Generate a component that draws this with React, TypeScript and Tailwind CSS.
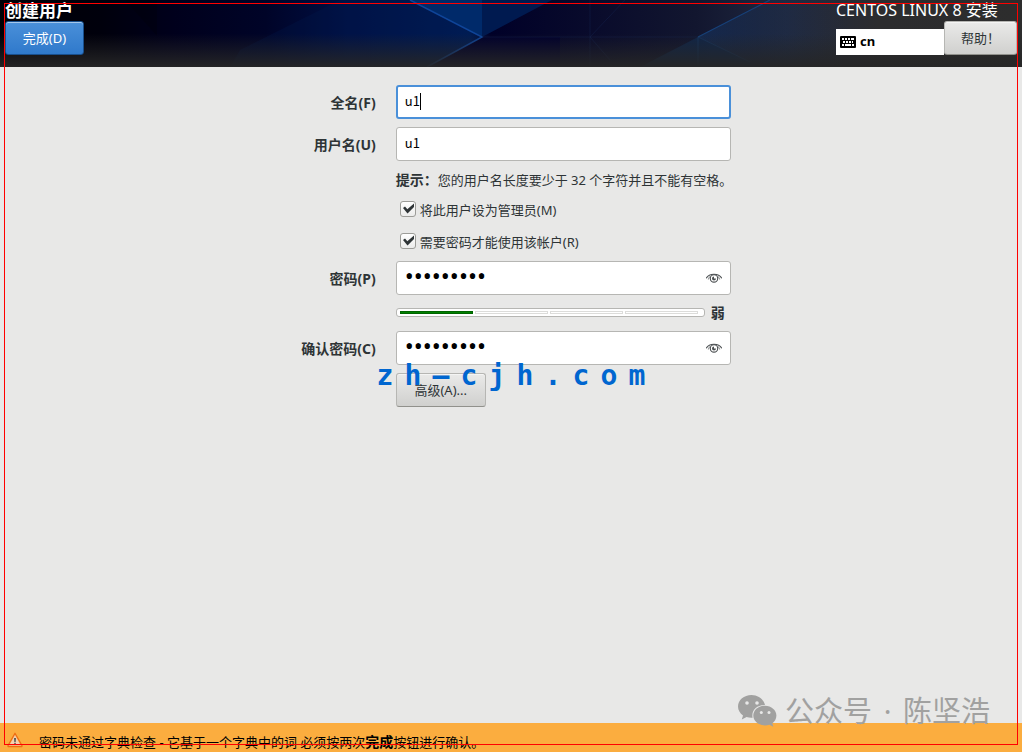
import { useState } from 'react';
import type { ReactNode } from 'react';

const WATERMARK = 'zh–cjh.com';

const buttonBase =
  'h-[34px] rounded-[3px] border pt-0.5 text-[13px] shadow-[inset_0_1px_rgba(255,255,255,0.5)]';
const greyButton =
  'border-[#b6b6b3] border-b-[#91918c] bg-linear-to-b from-[#eaeae9] to-[#d0d0ce] text-[#2e3436]';
const fieldBase =
  'h-[34px] w-full rounded-[3px] border bg-white pl-2 text-black outline-none';

function HeaderArt() {
  return (
    <svg
      className="absolute inset-0 h-full w-full"
      viewBox="0 0 1022 67"
      preserveAspectRatio="none"
      aria-hidden="true"
    >
      <defs>
        <linearGradient id="base" x1="0" x2="1" y1="0" y2="0">
          <stop offset="0" stopColor="#000006" />
          <stop offset="0.1" stopColor="#00000c" />
          <stop offset="0.17" stopColor="#00001c" />
          <stop offset="0.26" stopColor="#000428" />
          <stop offset="0.34" stopColor="#001044" />
          <stop offset="0.46" stopColor="#001c55" />
          <stop offset="0.48" stopColor="#000028" />
          <stop offset="0.68" stopColor="#12162f" />
          <stop offset="0.77" stopColor="#202940" />
          <stop offset="0.86" stopColor="#2c2c2e" />
          <stop offset="1" stopColor="#2d2d2d" />
        </linearGradient>
        <linearGradient id="fade" x1="0" x2="0" y1="0" y2="1">
          <stop offset="0.5" stopColor="#262626" stopOpacity="0" />
          <stop offset="1" stopColor="#262626" stopOpacity="0.95" />
        </linearGradient>
        <linearGradient id="facet" x1="0" x2="1" y1="0" y2="0">
          <stop offset="0" stopColor="#15305c" />
          <stop offset="1" stopColor="#202b3e" stopOpacity="0" />
        </linearGradient>
      </defs>
      <rect width="1022" height="67" fill="url(#base)" />
      <path d="M125 0 L157 36 V0 Z" fill="#000000" opacity="0.2" />
      <path d="M340 0 L240 50 L230 67 H427 L482 37 L410 0 Z" fill="#001a50" opacity="0.25" />
      <path d="M410 0 L482 37 V0 Z" fill="#002a6a" />
      <path d="M482 0 V37 L552 0 Z" fill="#001a50" />
      <path d="M482 37 L427 67 H560 V37 Z" fill="#00002c" />
      <path d="M698 37 L770 0 H850 V67 H760 Z" fill="url(#facet)" opacity="0.7" />
      <path d="M640 67 L698 37 L760 67 Z" fill="#10294f" opacity="0.8" />
      <path d="M410 0 L482 37 L427 67" fill="none" stroke="#0f4599" strokeWidth="1.5" />
      <path d="M698 37 L770 0" stroke="#174078" strokeWidth="1.2" />
      <path d="M698 37 L750 62 M698 37 V67" stroke="#1b4270" opacity="0.5" />
      <path d="M482 37 H698 M590 0 V67 M590 37 L625 0 M590 37 L610 60" fill="none" stroke="#1b2a58" opacity="0.35" />
      <rect width="1022" height="67" fill="url(#fade)" />
    </svg>
  );
}

function KeyboardIcon() {
  return (
    <svg width="16" height="12" viewBox="0 0 16 12" aria-hidden="true">
      <rect width="16" height="12" rx="1" fill="#000" />
      <path
        d="M2 2h2v2H2z M5 2h2v2H5z M8 2h2v2H8z M11 2h3v2h-3z M3 5h2v2H3z M6 5h2v2H6z M9 5h2v2H9z M12 5h1v2h-1z M2 8h2v2H2z M5 8h6v2H5z M12 8h2v2h-2z"
        fill="#fff"
      />
    </svg>
  );
}

function EyeIcon() {
  return (
    <svg width="16" height="16" viewBox="0 0 16 16" fill="none" stroke="#4c5052" aria-hidden="true">
      <path d="M0.3 8.3 C3 2.9 13 2.9 15.7 8.3" strokeWidth="1.2" />
      <path d="M2.3 9.5 L3.6 6.5 M13.7 9.5 L12.4 6.5" strokeWidth="0.7" />
      <circle cx="8" cy="8.4" r="3.7" strokeWidth="1.1" />
      <path d="M8 6.4 a2 2 0 1 0 2 2 L8 8.4 Z" fill="#4c5052" stroke="none" />
    </svg>
  );
}

function WarningIcon() {
  return (
    <svg width="16" height="16" viewBox="0 0 16 16" aria-hidden="true">
      <path
        d="M8 1.2 L15 13.6 Q15.3 14.6 14.3 14.6 H1.7 Q0.7 14.6 1 13.6 Z"
        fill="#f3a45c"
        stroke="#ee6e12"
        strokeWidth="1.2"
        strokeLinejoin="round"
      />
      <path d="M8 3.2 L13.6 13.2 H2.4 Z" fill="#f5dfcb" opacity="0.75" />
      <path d="M7 6 H9 L8.7 10 H7.3 Z M7.2 10.8 H8.8 V12.2 H7.2 Z" fill="#5a5a55" />
    </svg>
  );
}

function WeChatIcon() {
  return (
    <svg width="40" height="34" viewBox="0 0 40 34" fill="#a1a1a0" aria-hidden="true">
      <path d="M14.5 1 C7 1 1 6 1 12.5 C1 16.2 3 19.3 6 21.4 L4.8 25.5 L9.6 23.1 C11.3 23.6 13.6 23.9 15.6 23.7 C14 16.5 20 10.8 28 11 C26.7 5.2 21 1 14.5 1 Z" />
      <path d="M28 11.8 C21.3 11.8 16.3 16.2 16.3 21.6 C16.3 27.2 21.5 31.4 28 31.4 C29.6 31.4 31 31.1 32.4 30.7 L36.3 32.8 L35.3 29.4 C37.8 27.6 39.4 24.8 39.4 21.6 C39.4 16.2 34.4 11.8 28 11.8 Z" />
      <g fill="#e8e8e7">
        <circle cx="10" cy="9" r="1.8" />
        <circle cx="20" cy="9" r="1.8" />
        <circle cx="24.3" cy="18.6" r="1.5" />
        <circle cx="32" cy="18.6" r="1.5" />
      </g>
    </svg>
  );
}

function FieldLabel({ htmlFor, children }: { htmlFor: string; children: ReactNode }) {
  return (
    <label htmlFor={htmlFor} className="pt-0.5 text-right text-[14px] leading-5 font-bold">
      {children}
    </label>
  );
}

function CheckRow({ id, children }: { id: string; children: ReactNode }) {
  return (
    <div className="flex h-5 items-center gap-1 pl-1">
      <span className="relative size-4">
        <input
          id={id}
          type="checkbox"
          defaultChecked
          className="peer block size-4 appearance-none rounded-[3px] border border-[#9c9c98] bg-linear-to-b from-white to-[#ececeb]"
        />
        <svg
          className="pointer-events-none absolute inset-0 hidden size-4 peer-checked:block"
          viewBox="0 0 16 16"
          aria-hidden="true"
        >
          <path d="M3 7 L5 5.6 L7.3 8.3 L14 2.5 V6 L7.5 12.4 Z" fill="#2e3436" />
        </svg>
      </span>
      <label htmlFor={id} className="pt-0.5 text-[13px] leading-5">
        {children}
      </label>
    </div>
  );
}

function PasswordField({ id }: { id: string }) {
  const [visible, setVisible] = useState(false);
  return (
    <div className="relative">
      <input
        id={id}
        type={visible ? 'text' : 'password'}
        defaultValue="centos123"
        className={`${fieldBase} border-[#b6b6b3] pr-9 pb-1 ${
          visible ? 'text-[14px]' : 'text-[24px]'
        }`}
      />
      <button
        type="button"
        aria-label="显示密码"
        onClick={() => setVisible(!visible)}
        className="absolute top-[9px] right-[9px]"
      >
        <EyeIcon />
      </button>
    </div>
  );
}

function StrengthMeter({ level }: { level: number }) {
  return (
    <div className="flex h-5 items-start gap-1.5">
      <div
        role="meter"
        aria-label="密码强度"
        aria-valuemin={0}
        aria-valuemax={4}
        aria-valuenow={level}
        className="mt-[5px] flex h-[9px] flex-1 items-center gap-0.5 rounded-[3px] border border-[#b6b6b3] bg-white pr-1.5 pl-[3px]"
      >
        {[1, 2, 3, 4].map((step) => (
          <div
            key={step}
            className={`h-[3px] flex-1 border ${
              step <= level ? 'border-[#006400] bg-[#008000]' : 'border-[#dcdcda] bg-white'
            }`}
          />
        ))}
      </div>
      <span className="w-5 text-[14px] leading-5 font-bold">弱</span>
    </div>
  );
}

export default function App() {
  return (
    <div className="relative flex min-h-screen flex-col bg-[#e8e8e7] font-['Noto_Sans','Noto_Sans_CJK_SC',sans-serif] text-[#2e3436]">
      <header className="relative flex h-[67px] justify-between bg-[#262626] px-[5px]">
        <HeaderArt />
        <div className="relative">
          <h1 className="text-[17px] leading-[21px] font-bold text-white">创建用户</h1>
          <button
            type="button"
            className={`${buttonBase} w-[79px] border-[#184f8d] bg-linear-to-b from-[#4a90d9] to-[#2f79cb] text-white shadow-[inset_0_1px_rgba(255,255,255,0.2)]`}
          >
            完成(D)
          </button>
        </div>
        <div className="relative">
          <p className="text-[16px] leading-[21px] text-white">CENTOS LINUX 8 安装</p>
          <div className="flex items-end">
            <div className="flex h-[26px] w-[108px] items-center gap-1 bg-white pl-1 text-[13px] font-bold text-black">
              <KeyboardIcon />
              cn
            </div>
            <button type="button" className={`${buttonBase} ${greyButton} w-[73px]`}>
              帮助！
            </button>
          </div>
        </div>
      </header>

      <main className="flex-1 pt-[18px] pl-2.5">
        <form className="grid grid-cols-[auto_335px] items-center justify-center gap-x-5">
          <FieldLabel htmlFor="fullname">全名(F)</FieldLabel>
          <div className="relative">
            <input
              id="fullname"
              type="text"
              defaultValue="u1"
              className={`${fieldBase} border-2 border-[#4a90d9] pb-1 pl-[7px] font-['Noto_Sans_CJK_SC',sans-serif] text-[13px]`}
            />
            <span className="absolute top-2 left-6 h-[17px] w-px bg-black" />
          </div>

          <FieldLabel htmlFor="username">用户名(U)</FieldLabel>
          <input
            id="username"
            type="text"
            defaultValue="u1"
            className={`${fieldBase} my-2 border-[#b6b6b3] pb-1 font-['Noto_Sans_CJK_SC',sans-serif] text-[13px]`}
          />

          <p className="col-start-2 pt-px pb-[9px] text-[13px] leading-5 whitespace-nowrap">
            <b className="text-[14px]">提示：</b>您的用户名长度要少于 32 个字符并且不能有空格。
          </p>

          <div className="col-start-2 mb-2.5 flex flex-col gap-3">
            <CheckRow id="admin">将此用户设为管理员(M)</CheckRow>
            <CheckRow id="require-password">需要密码才能使用该帐户(R)</CheckRow>
          </div>

          <FieldLabel htmlFor="password">密码(P)</FieldLabel>
          <PasswordField id="password" />

          <div className="col-start-2 py-2">
            <StrengthMeter level={1} />
          </div>

          <FieldLabel htmlFor="confirm">确认密码(C)</FieldLabel>
          <PasswordField id="confirm" />

          <button
            type="button"
            className={`${buttonBase} ${greyButton} col-start-2 mt-2 w-[90px] justify-self-start`}
          >
            高级(A)...
          </button>
        </form>
      </main>

      <footer className="flex gap-4 bg-[#fbad3f] pt-[9px] pl-[7px] text-[13px] leading-5 text-black">
        <WarningIcon />
        <p>
          密码未通过字典检查 - 它基于一个字典中的词 必须按两次<b className="text-[14px] leading-none">完成</b>按钮进行确认。
        </p>
      </footer>

      {/* overlays */}
      <div className="pointer-events-none absolute top-[358px] left-1/2 flex -translate-x-1/2 font-['DejaVu_Sans_Mono',monospace] text-[28px] leading-9 font-bold text-[#0066d0]">
        {WATERMARK.split('').map((char, i) => (
          <span key={i} className="w-7 text-center">
            {char}
          </span>
        ))}
      </div>
      <div className="pointer-events-none absolute right-8 bottom-[21px] flex items-center gap-2 font-['Noto_Sans','Noto_Sans_CJK_SC',sans-serif] text-[29px] leading-10 text-[#a1a1a0]">
        <WeChatIcon />
        <p>
          公众号<span className="px-1"> · </span>陈坚浩
        </p>
      </div>
      <div className="pointer-events-none absolute top-[3px] right-1 bottom-[7px] left-1 border border-[#ff0000]" />
    </div>
  );
}
